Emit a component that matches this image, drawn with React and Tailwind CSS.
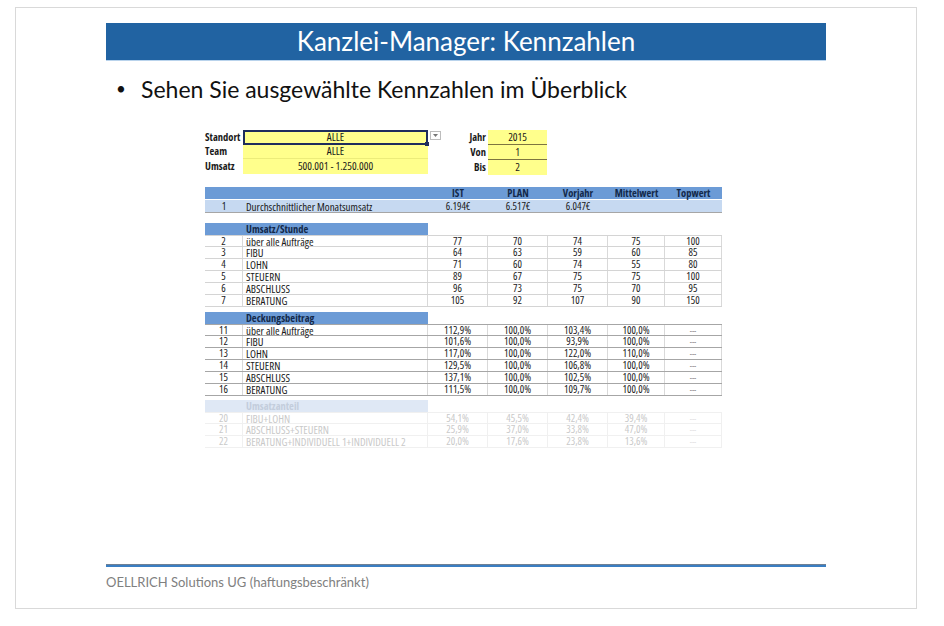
import React from "react";

const colW = ["w-[60px]", "w-[60px]", "w-[60px]", "w-[57px]", "w-[57px]"];

const umsatz = [
  [2, "über alle Aufträge", [77, 70, 74, 75, 100]],
  [3, "FIBU", [64, 63, 59, 60, 85]],
  [4, "LOHN", [71, 60, 74, 55, 80]],
  [5, "STEUERN", [89, 67, 75, 75, 100]],
  [6, "ABSCHLUSS", [96, 73, 75, 70, 95]],
  [7, "BERATUNG", [105, 92, 107, 90, 150]],
];

const deckung = [
  [11, "über alle Aufträge", ["112,9%", "100,0%", "103,4%", "100,0%", "---"]],
  [12, "FIBU", ["101,6%", "100,0%", "93,9%", "100,0%", "---"]],
  [13, "LOHN", ["117,0%", "100,0%", "122,0%", "110,0%", "---"]],
  [14, "STEUERN", ["129,5%", "100,0%", "106,8%", "100,0%", "---"]],
  [15, "ABSCHLUSS", ["137,1%", "100,0%", "102,5%", "100,0%", "---"]],
  [16, "BERATUNG", ["111,5%", "100,0%", "109,7%", "100,0%", "---"]],
];

const anteil = [
  [20, "FIBU+LOHN", ["54,1%", "45,5%", "42,4%", "39,4%", "---"]],
  [21, "ABSCHLUSS+STEUERN", ["25,9%", "37,0%", "33,8%", "47,0%", "---"]],
  [22, "BERATUNG+INDIVIDUELL 1+INDIVIDUELL 2", ["20,0%", "17,6%", "23,8%", "13,6%", "---"]],
];

const narrow = "font-['Open_Sans',sans-serif] font-stretch-condensed";
const cal = "font-['Lato','Open_Sans',sans-serif]";
const calSemi = "font-['Open_Sans',sans-serif] font-stretch-semi-condensed";

function DataRow({ idx, label, vals, variant, first }) {
  const h =
    variant === "strong"
      ? "border-[#a6a6a6]"
      : variant === "faded"
      ? "border-[#f0f0f0]"
      : "border-[#d4d4d4]";
  const v = variant === "faded" ? "border-[#f0f0f0]" : "border-[#d9d9d9]";
  const t = variant === "faded" ? "text-[#c9c9c9]" : "text-[#1a1a1a]";
  return (
    <div className={`flex h-[12px] items-center border-b ${h} ${first ? "border-t" : ""} ${t}`}>
      <div className={`w-[38px] h-full flex items-center justify-center border-r ${v}`}>{idx}</div>
      <div className={`w-[185px] h-full flex items-center pl-[3px] border-r ${v} whitespace-nowrap text-[11px]`}>
        {label}
      </div>
      {vals.map((val, i) => (
        <div
          key={i}
          className={`${colW[i]} h-full flex items-center justify-center border-r ${v} ${
            val === "---" ? (variant === "faded" ? "text-[#dddddd] text-[8px]" : "text-[#7a7a7a] text-[8px]") : ""
          }`}
        >
          {val}
        </div>
      ))}
    </div>
  );
}

function SectionHead({ title, faded }) {
  return (
    <div className="flex h-[12px]">
      <div
        className={`w-[223px] h-full flex items-center font-bold ${
          faded ? "bg-[#dfe8f5] text-[#c3cddc]" : "bg-[#6c9bd6] text-[#13294a]"
        }`}
      >
        <span className="pl-[41px]">{title}</span>
      </div>
    </div>
  );
}

function Dropdown() {
  return (
    <div className="ml-[2px] mt-[1px] w-[11px] h-[9px] border border-[#bdbdbd] bg-white flex items-center justify-center">
      <svg width="5" height="3" viewBox="0 0 5 3">
        <path d="M0 0 L5 0 L2.5 3 Z" fill="#777" />
      </svg>
    </div>
  );
}

export default function App() {
  return (
    <div className="w-[944px] h-[626px] bg-white pt-[7px] pl-[15px]">
      <div className="w-[902px] h-[602px] border border-[#d9d9d9] flex flex-col pl-[90px]">
        {/* Title */}
        <div className="mt-[15px] w-[720px]">
          <div
            className={`h-[37px] bg-[#2163a2] flex items-center justify-center text-white text-[26px] ${cal}`}
          >
            Kanzlei-Manager: Kennzahlen
          </div>
          <div className="h-[1px] bg-[#b9d3ec]" />
        </div>

        {/* Bullet */}
        <div className={`mt-[15px] flex items-center h-[26px] text-[23px] text-[#111] ${cal}`}>
          <span className="w-[35px] pl-[10px] text-[17px]">•</span>
          <span>Sehen Sie ausgewählte Kennzahlen im Überblick</span>
        </div>

        {/* Form */}
        <div className={`mt-[28px] ml-[99px] flex text-[11px] text-[#1a1a1a] ${calSemi}`}>
          <div className="flex flex-col">
            <div className="flex h-[15px] items-start">
              <div className="w-[38px] h-full flex items-center font-bold text-[10.5px]">Standort</div>
              <div className="w-[185px] h-full bg-[#ffff8c] border-2 border-[#1f2d5c] flex items-center justify-center relative">
                ALLE
                <div className="absolute right-[-3px] bottom-[-3px] w-[4px] h-[4px] bg-[#1f2d5c]" />
              </div>
              <Dropdown />
            </div>
            <div className="flex h-[14px]">
              <div className="w-[38px] h-full flex items-center font-bold text-[10.5px]">Team</div>
              <div className="w-[185px] h-full bg-[#ffff8c] border-b border-[#ecec7a] flex items-center justify-center">
                ALLE
              </div>
            </div>
            <div className="flex h-[15px]">
              <div className="w-[38px] h-full flex items-center font-bold text-[10.5px]">Umsatz</div>
              <div className="w-[185px] h-full bg-[#ffff8c] flex items-center justify-center">
                500.001 - 1.250.000
              </div>
            </div>
          </div>
          <div className="flex flex-col ml-[2px]">
            <div className="flex h-[15px]">
              <div className="w-[45px] h-full flex items-center justify-end pr-[2px] font-bold text-[10.5px]">Jahr</div>
              <div className="w-[59px] h-full bg-[#ffff8c] border-b border-[#7d7540] flex items-center justify-center">
                2015
              </div>
            </div>
            <div className="flex h-[15px]">
              <div className="w-[45px] h-full flex items-center justify-end pr-[2px] font-bold text-[10.5px]">Von</div>
              <div className="w-[59px] h-full bg-[#ffff8c] border-b border-[#7d7540] flex items-center justify-center">
                1
              </div>
            </div>
            <div className="flex h-[15px]">
              <div className="w-[45px] h-full flex items-center justify-end pr-[2px] font-bold text-[10.5px]">Bis</div>
              <div className="w-[59px] h-full bg-[#ffff8c] flex items-center justify-center">2</div>
            </div>
          </div>
        </div>

        {/* Table */}
        <div className={`mt-[12px] ml-[99px] w-[517px] text-[10.5px] leading-[11px] ${narrow}`}>
          <div className="flex h-[12px] bg-[#6c9bd6] font-bold text-[#13294a] items-center">
            <div className="w-[223px]" />
            {["IST", "PLAN", "Vorjahr", "Mittelwert", "Topwert"].map((h, i) => (
              <div key={h} className={`${colW[i]} text-center`}>
                {h}
              </div>
            ))}
          </div>
          <div className="flex h-[13px] mt-[1px] bg-[#c6d9f1] border-b border-[#a6a6a6] items-center text-[#1a1a1a]">
            <div className="w-[38px] text-center">1</div>
            <div className="w-[185px] pl-[3px] whitespace-nowrap text-[11px]">Durchschnittlicher Monatsumsatz</div>
            {["6.194€", "6.517€", "6.047€", "", ""].map((v, i) => (
              <div key={i} className={`${colW[i]} text-center`}>
                {v}
              </div>
            ))}
          </div>

          <div className="mt-[10px]">
            <SectionHead title="Umsatz/Stunde" />
            {umsatz.map(([a, b, c], i) => (
              <DataRow key={a} idx={a} label={b} vals={c} first={i === 0} />
            ))}
          </div>

          <div className="mt-[5px]">
            <SectionHead title="Deckungsbeitrag" />
            {deckung.map(([a, b, c], i) => (
              <DataRow key={a} idx={a} label={b} vals={c} variant="strong" first={i === 0} />
            ))}
          </div>

          <div className="mt-[4px]">
            <SectionHead title="Umsatzanteil" faded />
            {anteil.map(([a, b, c], i) => (
              <DataRow key={a} idx={a} label={b} vals={c} variant="faded" first={i === 0} />
            ))}
          </div>
        </div>

        <div className="flex-1" />

        {/* Footer */}
        <div className="w-[720px] pb-[17px]">
          <div className="h-[1px] bg-[#6f8094]" />
          <div className="h-[2px] bg-[#3a7ec2]" />
          <div className={`mt-[7px] text-[13px] leading-[17px] text-[#808080] ${cal}`}>
            OELLRICH Solutions UG (haftungsbeschränkt)
          </div>
        </div>
      </div>
    </div>
  );
}
